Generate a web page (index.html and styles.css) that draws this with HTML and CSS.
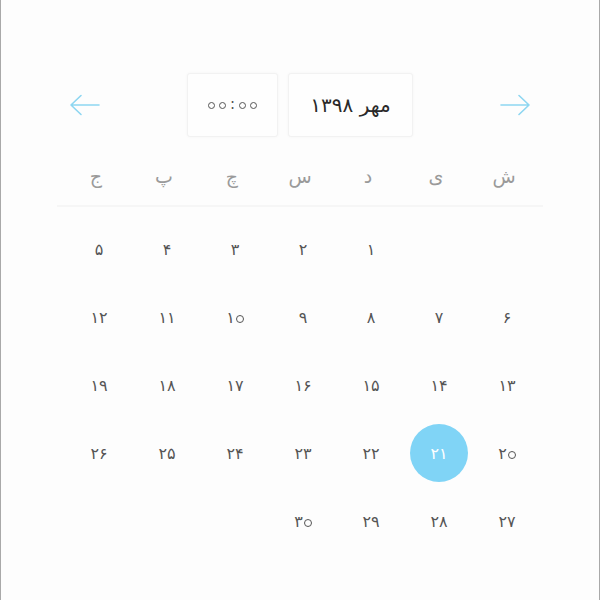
FILE: index.html
```html
<!DOCTYPE html>
<html lang="fa">
<head>
<meta charset="utf-8">
<link rel="stylesheet" href="styles.css">
</head>
<body>
<div class="frame">
  <div class="calendar" dir="rtl">
    <div class="header">
      <button class="nav">
        <svg width="32" height="22" viewBox="0 0 32 22"><path d="M2 11H30M20 1.5L30 11L20 20.5" fill="none" stroke="#8dd6f1" stroke-width="1.6" stroke-linecap="round" stroke-linejoin="round"/></svg>
      </button>
      <div class="boxes">
        <div class="box month">مهر ۱۳۹۸</div>
        <div class="box time" dir="ltr"><span class="z">۰</span><span class="z">۰</span><span class="colon">:</span><span class="z">۰</span><span class="z">۰</span></div>
      </div>
      <button class="nav">
        <svg width="32" height="22" viewBox="0 0 32 22"><path d="M30 11H2M12 1.5L2 11L12 20.5" fill="none" stroke="#8dd6f1" stroke-width="1.6" stroke-linecap="round" stroke-linejoin="round"/></svg>
      </button>
    </div>
    <div class="weekdays">
      <span>ش</span><span>ی</span><span>د</span><span>س</span><span>چ</span><span>پ</span><span>ج</span>
    </div>
    <div class="days">
      <span></span><span></span><span>۱</span><span>۲</span><span>۳</span><span>۴</span><span>۵</span>
      <span>۶</span><span>۷</span><span>۸</span><span>۹</span><span>۱<i class="z">۰</i></span><span>۱۱</span><span>۱۲</span>
      <span>۱۳</span><span>۱۴</span><span>۱۵</span><span>۱۶</span><span>۱۷</span><span>۱۸</span><span>۱۹</span>
      <span>۲<i class="z">۰</i></span><span class="selected">۲۱</span><span>۲۲</span><span>۲۳</span><span>۲۴</span><span>۲۵</span><span>۲۶</span>
      <span>۲۷</span><span>۲۸</span><span>۲۹</span><span>۳<i class="z">۰</i></span>
    </div>
  </div>
</div>
</body>
</html>
```

FILE: styles.css
```css
html, body {
  margin: 0;
  padding: 0;
  background: #fdfdfd;
}
.frame {
  width: 598px;
  height: 600px;
  border-left: 1px solid #a9a9a9;
  border-right: 1px solid #a9a9a9;
  font-family: "DejaVu Sans", sans-serif;
}
.calendar {
  padding-top: 73px;
}
.header {
  display: flex;
  align-items: center;
  justify-content: space-between;
  padding: 0 68px;
  height: 64px;
}
.nav {
  background: none;
  border: none;
  padding: 0;
  width: 32px;
  height: 22px;
  display: flex;
}
.boxes {
  display: flex;
  gap: 10px;
}
.box {
  height: 62px;
  display: flex;
  align-items: center;
  justify-content: center;
  border: 1px solid #f2f2f2;
  border-radius: 3px;
  box-shadow: 0 0 3px rgba(0,0,0,0.04);
  background: #fefefe;
  color: #2a2a2a;
}
.month {
  width: 123px;
  font-size: 20px;
}
.time {
  width: 89px;
  font-size: 15px;
  color: #555;
  gap: 4px;
}
.z {
  display: inline-block;
  box-sizing: border-box;
  width: 7px;
  height: 7px;
  border: 1.3px solid #555;
  border-radius: 50%;
  color: transparent;
  font-style: normal;
  overflow: hidden;
  font-size: 6px;
  line-height: 5px;
  text-align: center;
}
.colon {
  line-height: 1;
  margin-top: -2px;
}
.weekdays {
  display: grid;
  grid-template-columns: repeat(7, 68px);
  justify-content: center;
  margin: 0 56px;
  height: 70px;
  align-items: center;
  padding-top: 10px;
  box-sizing: border-box;
  border-bottom: 2px solid #f6f6f6;
  color: #9a9a9a;
  font-size: 19px;
}
.weekdays span, .days span {
  text-align: center;
}
.days {
  display: grid;
  grid-template-columns: repeat(7, 68px);
  grid-auto-rows: 68px;
  justify-content: center;
  padding-top: 8px;
  padding-left: 6px;
  color: #555;
  font-size: 16px;
}
.days span {
  display: flex;
  direction: ltr;
  align-items: center;
  justify-content: center;
  gap: 1px;
}
.days .z {
  width: 8px;
  height: 8px;
  margin-top: 3px;
}
.days .selected {
  width: 58px;
  height: 58px;
  margin: 5px;
  border-radius: 50%;
  background: #80d4f6;
  color: #fff;
}
```
